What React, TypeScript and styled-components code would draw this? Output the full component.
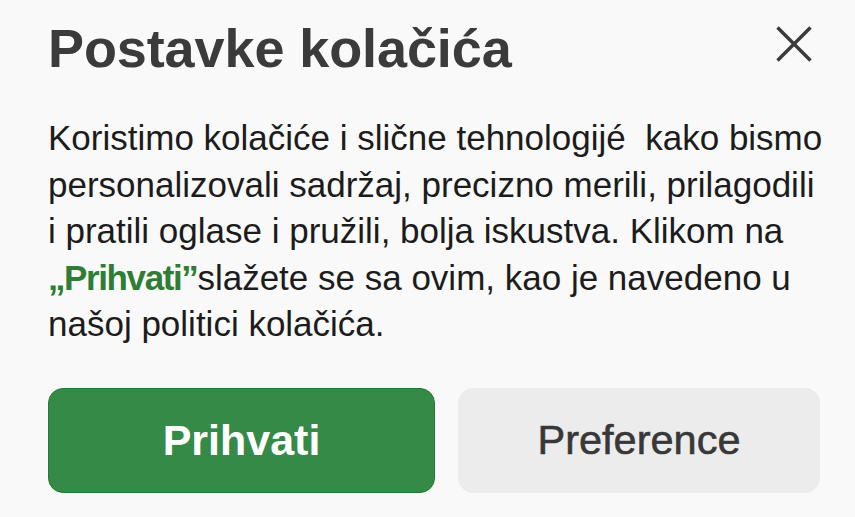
import * as React from 'react';
import styled, { createGlobalStyle } from 'styled-components';

const GlobalStyle = createGlobalStyle`
  html, body {
    margin: 0;
    padding: 0;
    background: #f9f9f9;
  }
  body {
    font-family: 'Liberation Sans', Arial, sans-serif;
  }
`;

const lines = [
  'Koristimo kolačiće i slične tehnologijé\u00a0 kako bismo',
  'personalizovali sadržaj, precizno merili, prilagodili',
  'i pratili oglase i pružili, bolja iskustva. Klikom na',
];

const CloseIcon: React.FC = () => (
  <svg width="36" height="36" viewBox="0 0 36 36" fill="none">
    <path d="M1.5 1.5 L34.5 34.5 M34.5 1.5 L1.5 34.5" stroke="#3a3a3a" strokeWidth="3.4" />
  </svg>
);

const App: React.FC = () => {
  return (
    <>
      <GlobalStyle />
      <Dialog>
        <Header>
          <Title>Postavke kolačića</Title>
          <CloseButton aria-label="Zatvori">
            <CloseIcon />
          </CloseButton>
        </Header>

        <Body>
          {lines.map((l) => (
            <Line key={l}>{l}</Line>
          ))}
          <Line>
            <Highlight>„Prihvati”</Highlight>slažete se sa ovim, kao je navedeno u
          </Line>
          <Line>našoj politici kolačića.</Line>
        </Body>

        <Actions>
          <Button $primary>Prihvati</Button>
          <Button>Preference</Button>
        </Actions>
      </Dialog>
    </>
  );
};

export default App;

const Dialog = styled.div`
  width: 855px;
  height: 517px;
  box-sizing: border-box;
  padding: 18px 35px 0 48px;
  display: flex;
  flex-direction: column;
  background: #f9f9f9;
`;

const Header = styled.div`
  display: flex;
  justify-content: space-between;
  align-items: flex-start;
  padding-right: 8px;
`;

const Title = styled.h1`
  margin: 0;
  font-size: 54px;
  line-height: 60px;
  font-weight: 700;
  color: #3b3b3b;
  letter-spacing: -0.1px;
`;

const CloseButton = styled.button`
  margin-top: 8px;
  padding: 0;
  border: 0;
  background: none;
  width: 36px;
  height: 36px;
  display: flex;
  cursor: pointer;
`;

const Body = styled.p`
  margin: 37px 0 0;
  font-size: 35px;
  line-height: 46.5px;
  color: #1c1c1c;
`;

const Line = styled.span`
  display: block;
  white-space: nowrap;
`;

const Highlight = styled.span`
  color: #2f7d35;
  font-weight: 700;
  letter-spacing: -1.4px;
`;

const Actions = styled.div`
  margin-top: 40px;
  display: grid;
  grid-template-columns: 387px 362px;
  gap: 23px;
`;

const Button = styled.button<{ $primary?: boolean }>`
  height: 105px;
  border-radius: 15px;
  font-family: 'Liberation Sans', Arial, sans-serif;
  font-size: ${(p) => (p.$primary ? '43px' : '41.5px')};
  font-weight: ${(p) => (p.$primary ? 700 : 400)};
  color: ${(p) => (p.$primary ? '#ffffff' : '#383838')};
  background: ${(p) => (p.$primary ? '#368a47' : '#ececec')};
  border: 1px solid ${(p) => (p.$primary ? '#237a31' : '#ececec')};
  -webkit-text-stroke: ${(p) => (p.$primary ? '0' : '0.6px #383838')};
  cursor: pointer;
`;
